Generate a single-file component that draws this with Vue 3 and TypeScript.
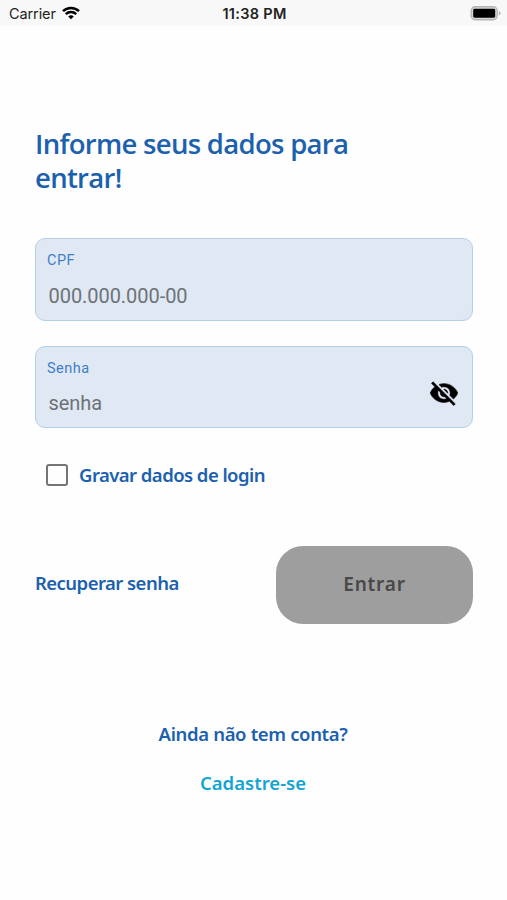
<script setup lang="ts">
import { ref } from 'vue'

const cpf = ref('')
const senha = ref('')
const visible = ref(false)
const remember = ref(false)
</script>

<template>
  <div class="screen">
    <header class="status">
      <div class="carrier">
        <span>Carrier</span>
        <svg class="wifi" viewBox="0 0 18 14" width="18" height="14">
          <path d="M1 5.2 A11.5 11.5 0 0 1 17 5.2" />
          <path d="M3.8 8.1 A7.6 7.6 0 0 1 14.2 8.1" />
          <path class="dot" d="M9 13.2 L6.2 10.5 A4 4 0 0 1 11.8 10.5 Z" />
        </svg>
      </div>
      <span class="time">11:38 PM</span>
      <svg class="battery" viewBox="0 0 31 16" width="31" height="16">
        <rect x="1.2" y="1.7" width="26" height="13" rx="4" fill="#d8d8d8" stroke="#b5b5b5" stroke-width="1.4" />
        <rect x="3.2" y="3.7" width="22" height="9" rx="1.4" fill="#000" />
        <path d="M28.8 5.8 Q30.6 6.8 30.6 8.2 Q30.6 9.6 28.8 10.6 Z" fill="#b5b5b5" />
      </svg>
    </header>

    <main class="content">
      <h1>Informe seus dados para<br />entrar!</h1>

      <label class="field cpf">
        <span class="label">CPF</span>
        <input v-model="cpf" type="text" placeholder="000.000.000-00" />
      </label>

      <div class="field password">
        <label class="label" for="senha">Senha</label>
        <div class="row">
          <input id="senha" v-model="senha" :type="visible ? 'text' : 'password'" placeholder="senha" />
          <button class="eye" type="button" aria-label="Mostrar senha" @click="visible = !visible">
            <svg viewBox="0 0 24 24" width="30" height="30">
              <path d="M12 7c2.76 0 5 2.24 5 5 0 .65-.13 1.26-.36 1.83l2.92 2.92c1.51-1.26 2.7-2.89 3.43-4.75-1.73-4.39-6-7.5-11-7.5-1.4 0-2.74.25-3.98.7l2.16 2.16C10.74 7.13 11.35 7 12 7zM2 4.27l2.28 2.28.46.46C3.08 8.3 1.78 10.02 1 12c1.73 4.39 6 7.5 11 7.5 1.55 0 3.03-.3 4.38-.84l.42.42L19.73 22 21 20.73 3.27 3 2 4.27zM7.53 9.8l1.55 1.55c-.05.21-.08.43-.08.65 0 1.66 1.34 3 3 3 .22 0 .44-.03.65-.08l1.55 1.55c-.67.33-1.41.53-2.2.53-2.76 0-5-2.24-5-5 0-.79.2-1.53.53-2.2zm4.31-.78l3.15 3.15.02-.16c0-1.66-1.34-3-3-3l-.17.01z" />
            </svg>
          </button>
        </div>
      </div>

      <label class="remember">
        <input v-model="remember" type="checkbox" />
        <span>Gravar dados de login</span>
      </label>

      <div class="actions">
        <a class="recover">Recuperar senha</a>
        <button class="enter" type="button">Entrar</button>
      </div>

      <footer class="signup">
        <span class="ask">Ainda não tem conta?</span>
        <a class="register">Cadastre-se</a>
      </footer>
    </main>
  </div>
</template>

<style>
body {
  background: #fff;
}
</style>

<style scoped>
.screen {
  height: 900px;
  overflow: hidden;
  background: #fefefe;
  color: #1c61ae;
  font-family: "Noto Sans", sans-serif;
  font-weight: 600;
}
.status {
  box-sizing: border-box;
  height: 26px;
  padding: 1px 6px 0 9px;
  display: grid;
  grid-template-columns: 1fr auto 1fr;
  align-items: center;
  background: #f8f8f8;
  color: #222;
  font: 400 14.5px/20px Inter, sans-serif;
}
.carrier {
  display: flex;
  align-items: center;
  gap: 6px;
  letter-spacing: -0.1px;
}
.wifi {
  fill: none;
  stroke: #000;
  stroke-width: 2.5;
  margin-top: -2px;
}
.wifi .dot {
  fill: #000;
  stroke: none;
}
.time {
  font-weight: 600;
  font-size: 14.5px;
  letter-spacing: 0.3px;
  margin-right: 1px;
}
.battery {
  justify-self: end;
  margin-top: -1px;
}
.content {
  padding: 101px 34px 0 35px;
  display: flex;
  flex-direction: column;
}
h1 {
  margin: 0 0 43px;
  font-family: "Open Sans", sans-serif;
  font-size: 27.5px;
  line-height: 34px;
  font-weight: 600;
  letter-spacing: -0.7px;
  white-space: nowrap;
}
.field {
  box-sizing: border-box;
  height: 83px;
  padding: 12px 12px 0 11px;
  display: flex;
  flex-direction: column;
  border: 1px solid #b5d0e6;
  border-radius: 10px;
  background: #dfe8f3;
  font-family: Roboto, sans-serif;
  font-weight: 400;
}
.password {
  margin-top: 25px;
  height: 82px;
}
.label {
  color: #3f7fc6;
  font-size: 14.5px;
  line-height: 20px;
  letter-spacing: 0.5px;
}
.field input {
  flex: 1;
  min-width: 0;
  height: 28px;
  margin: 0;
  padding: 0 1px 0 1.5px;
  border: 0;
  outline: 0;
  background: none;
  font: 400 20px/28px Roboto, sans-serif;
  letter-spacing: -0.05px;
  color: #444;
}
.cpf input {
  flex: none;
  margin-top: 11px;
}
.field input::placeholder {
  color: #6d7278;
  opacity: 1;
}
.row {
  display: flex;
  align-items: flex-start;
  padding-top: 10px;
}
.eye {
  margin: -11px 1px 0 0;
  padding: 0;
  border: 0;
  background: none;
  line-height: 0;
  fill: #000;
  stroke: #000;
  stroke-width: 0.5;
}
.remember {
  margin: 34px 0 0 11px;
  display: flex;
  align-items: center;
  gap: 11px;
  height: 26px;
  font-size: 18.5px;
  letter-spacing: -0.55px;
}
.remember span {
  margin-top: -2px;
}
.remember input {
  appearance: none;
  box-sizing: border-box;
  width: 22px;
  height: 22px;
  margin: 0;
  border: 2px solid #757575;
  border-radius: 3px;
}
.actions {
  margin-top: 58px;
  display: flex;
  align-items: center;
  justify-content: space-between;
}
.recover {
  font-size: 18.5px;
  line-height: 24px;
  letter-spacing: -0.55px;
  margin-top: -5px;
}
.enter {
  width: 197px;
  height: 78px;
  padding: 0 0 3px;
  border: 0;
  border-radius: 27px;
  background: #9e9e9e;
  color: #484848;
  font: 600 19px "Noto Sans", sans-serif;
  letter-spacing: 0.8px;
}
.signup {
  margin-top: 98px;
  padding-right: 2px;
  display: flex;
  flex-direction: column;
  align-items: center;
  gap: 25px;
  font-size: 18.5px;
  line-height: 24px;
}
.ask {
  letter-spacing: -0.35px;
}
.register {
  color: #12a5d3;
}
</style>
